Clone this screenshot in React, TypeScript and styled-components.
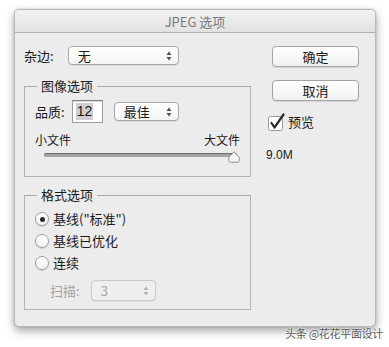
import * as React from "react";
import styled, { createGlobalStyle } from "styled-components";

const GlobalStyle = createGlobalStyle`
  html, body {
    margin: 0;
    padding: 0;
    background: #ffffff;
  }
  body {
    font-family: "Noto Sans CJK SC", "Liberation Sans", sans-serif;
    font-size: 13px;
    color: #1a1a1a;
  }
`;

const Page = styled.div`
  position: relative;
  width: 389px;
  height: 347px;
  padding: 9px 0 0 14px;
  box-sizing: border-box;
`;

const Window = styled.div`
  width: 362px;
  height: 318px;
  background: #ececec;
  border-radius: 5px;
  border: 1px solid #b9b9b9;
  box-sizing: border-box;
  box-shadow: 0 4px 10px rgba(0, 0, 0, 0.35), 0 0 2px rgba(0, 0, 0, 0.2);
  display: flex;
  flex-direction: column;
  overflow: hidden;
`;

const TitleBar = styled.div`
  height: 22px;
  flex: none;
  display: flex;
  align-items: center;
  justify-content: center;
  background: linear-gradient(#f3f3f3, #e1e1e1);
  border-bottom: 1px solid #b1b1b1;
  color: #7a7a7a;
  font-size: 13px;
`;

const Body = styled.div`
  display: flex;
  padding: 13px 0 0 9px;
`;

const LeftColumn = styled.div`
  width: 227px;
  display: flex;
  flex-direction: column;
`;

const RightColumn = styled.div`
  display: flex;
  flex-direction: column;
  margin-left: 21px;
`;

const Row = styled.div<{ $gap?: number }>`
  display: flex;
  align-items: center;
  gap: ${p => p.$gap ?? 0}px;
`;

const Label = styled.span<{ $disabled?: boolean }>`
  color: ${p => (p.$disabled ? "#a3a3a3" : "#1a1a1a")};
  line-height: 16px;
`;

const SelectBox = styled.div<{ $width: number; $disabled?: boolean }>`
  width: ${p => p.$width}px;
  height: 19px;
  box-sizing: border-box;
  border: 1px solid ${p => (p.$disabled ? "#c9c9c9" : "#a7a7a7")};
  border-radius: 4px;
  background: ${p =>
    p.$disabled ? "#efefef" : "linear-gradient(#ffffff, #f4f4f4)"};
  box-shadow: 0 1px 0 rgba(0, 0, 0, 0.06);
  display: flex;
  align-items: center;
  justify-content: space-between;
  padding: 0 6px 0 9px;
  color: ${p => (p.$disabled ? "#a3a3a3" : "#1a1a1a")};
`;

const Button = styled.div`
  width: 87px;
  height: 21px;
  box-sizing: border-box;
  border: 1px solid #a4a4a4;
  border-radius: 4px;
  background: linear-gradient(#ffffff, #f1f1f1);
  box-shadow: 0 1px 1px rgba(0, 0, 0, 0.1);
  display: flex;
  align-items: center;
  justify-content: center;
  margin-bottom: 13px;
`;

const Group = styled.fieldset<{ $height: number }>`
  margin: 0;
  padding: 0;
  height: ${p => p.$height}px;
  box-sizing: border-box;
  border: 1px solid #b3b3b3;
  border-top-color: #a9a9a9;
  min-width: 0;
`;

const Legend = styled.legend`
  margin-left: 12px;
  padding: 0 4px;
  line-height: 14px;
`;

const GroupContent = styled.div`
  display: flex;
  flex-direction: column;
`;

const QualityInput = styled.div`
  width: 31px;
  height: 23px;
  box-sizing: border-box;
  background: #ffffff;
  border: 1px solid #9d9d9d;
  border-top-color: #7f7f7f;
  box-shadow: inset 0 1px 1px rgba(0, 0, 0, 0.15);
  display: flex;
  align-items: center;
  padding-left: 3px;
`;

const Selected = styled.span`
  background: #cfcfcf;
  font-family: "Liberation Sans", sans-serif;
  font-size: 14px;
  line-height: 17px;
  padding: 0 1px;
`;

const SliderLabels = styled.div`
  display: flex;
  justify-content: space-between;
  width: 205px;
  font-size: 12px;
  line-height: 14px;
`;

const Track = styled.div`
  width: 193px;
  height: 4px;
  margin-left: 9px;
  border-radius: 2px;
  background: #a5a5a5;
  box-shadow: inset 0 1px 1px rgba(0, 0, 0, 0.35);
  position: relative;
`;

const Thumb = styled.svg`
  position: absolute;
  right: -3px;
  top: -2px;
`;

const RadioRow = styled.div`
  display: flex;
  align-items: center;
  gap: 4px;
  height: 22px;
`;

const RadioCircle = styled.div<{ $checked?: boolean }>`
  width: 14px;
  height: 14px;
  box-sizing: border-box;
  border-radius: 50%;
  border: 1px solid #9c9c9c;
  background: linear-gradient(#ffffff, #f2f2f2);
  box-shadow: 0 1px 1px rgba(0, 0, 0, 0.12);
  display: flex;
  align-items: center;
  justify-content: center;
  &::after {
    content: "";
    display: ${p => (p.$checked ? "block" : "none")};
    width: 5px;
    height: 5px;
    border-radius: 50%;
    background: #2a2a2a;
  }
`;

const SizeText = styled.div`
  font-family: "Liberation Sans", sans-serif;
  font-size: 12px;
  margin: 17px 0 0 -6px;
`;

const Watermark = styled.div`
  position: absolute;
  right: 6px;
  bottom: 6px;
  font-size: 11px;
  color: #5a5a5a;
  text-shadow: 0 0 2px #ffffff, 0 0 2px #ffffff;
  letter-spacing: -0.3px;
`;

const Arrows = ({ color = "#555" }: { color?: string }) => (
  <svg width="6" height="10" viewBox="0 0 6 10">
    <path d="M3 0.5 L5.5 4 H0.5 Z" fill={color} />
    <path d="M3 9.5 L5.5 6 H0.5 Z" fill={color} />
  </svg>
);

const CheckBox = () => (
  <svg width="18" height="18" viewBox="0 0 18 18">
    <rect
      x="0.5"
      y="3.5"
      width="14"
      height="14"
      rx="2"
      fill="#fff"
      stroke="#9a9a9a"
    />
    <path
      d="M3.5 10 L6.5 14.5 L15.5 1.5"
      fill="none"
      stroke="#2b2b2b"
      strokeWidth="2.2"
      strokeLinecap="round"
      strokeLinejoin="round"
    />
  </svg>
);

export default function App() {
  return (
    <>
      <GlobalStyle />
      <Page>
        <Window>
          <TitleBar>JPEG 选项</TitleBar>
          <Body>
            <LeftColumn>
              <Row $gap={14}>
                <Label>杂边:</Label>
                <SelectBox $width={111}>
                  <span>无</span>
                  <Arrows />
                </SelectBox>
              </Row>

              <Group $height={98} style={{ marginTop: 14 }}>
                <Legend>图像选项</Legend>
                <GroupContent style={{ padding: "7px 0 0 10px" }}>
                  <Row $gap={7}>
                    <Label>品质:</Label>
                    <QualityInput>
                      <Selected>12</Selected>
                    </QualityInput>
                    <SelectBox $width={65} style={{ marginLeft: 4 }}>
                      <span>最佳</span>
                      <Arrows />
                    </SelectBox>
                  </Row>
                  <div style={{ height: 10 }} />
                  <SliderLabels>
                    <span>小文件</span>
                    <span>大文件</span>
                  </SliderLabels>
                  <div style={{ height: 6 }} />
                  <Track>
                    <Thumb width="12" height="12" viewBox="0 0 12 12">
                      <path
                        d="M6 0.8 L11.2 6.5 V9.5 Q11.2 11.2 9.5 11.2 H2.5 Q0.8 11.2 0.8 9.5 V6.5 Z"
                        fill="#f7f7f7"
                        stroke="#8a8a8a"
                        strokeWidth="1"
                      />
                    </Thumb>
                  </Track>
                </GroupContent>
              </Group>

              <Group $height={122} style={{ marginTop: 11 }}>
                <Legend>格式选项</Legend>
                <GroupContent style={{ padding: "6px 0 0 10px" }}>
                  <RadioRow>
                    <RadioCircle $checked />
                    <Label>基线("标准")</Label>
                  </RadioRow>
                  <RadioRow>
                    <RadioCircle />
                    <Label>基线已优化</Label>
                  </RadioRow>
                  <RadioRow>
                    <RadioCircle />
                    <Label>连续</Label>
                  </RadioRow>
                  <Row $gap={11} style={{ marginTop: 6, marginLeft: 15 }}>
                    <Label $disabled>扫描:</Label>
                    <SelectBox $width={65} $disabled style={{ height: 21 }}>
                      <span>3</span>
                      <Arrows color="#b0b0b0" />
                    </SelectBox>
                  </Row>
                </GroupContent>
              </Group>
            </LeftColumn>

            <RightColumn>
              <Button>确定</Button>
              <Button>取消</Button>
              <Row $gap={2} style={{ marginLeft: -4, marginTop: -1 }}>
                <CheckBox />
                <Label>预览</Label>
              </Row>
              <SizeText>9.0M</SizeText>
            </RightColumn>
          </Body>
        </Window>
        <Watermark>头条 @花花平面设计</Watermark>
      </Page>
    </>
  );
}
